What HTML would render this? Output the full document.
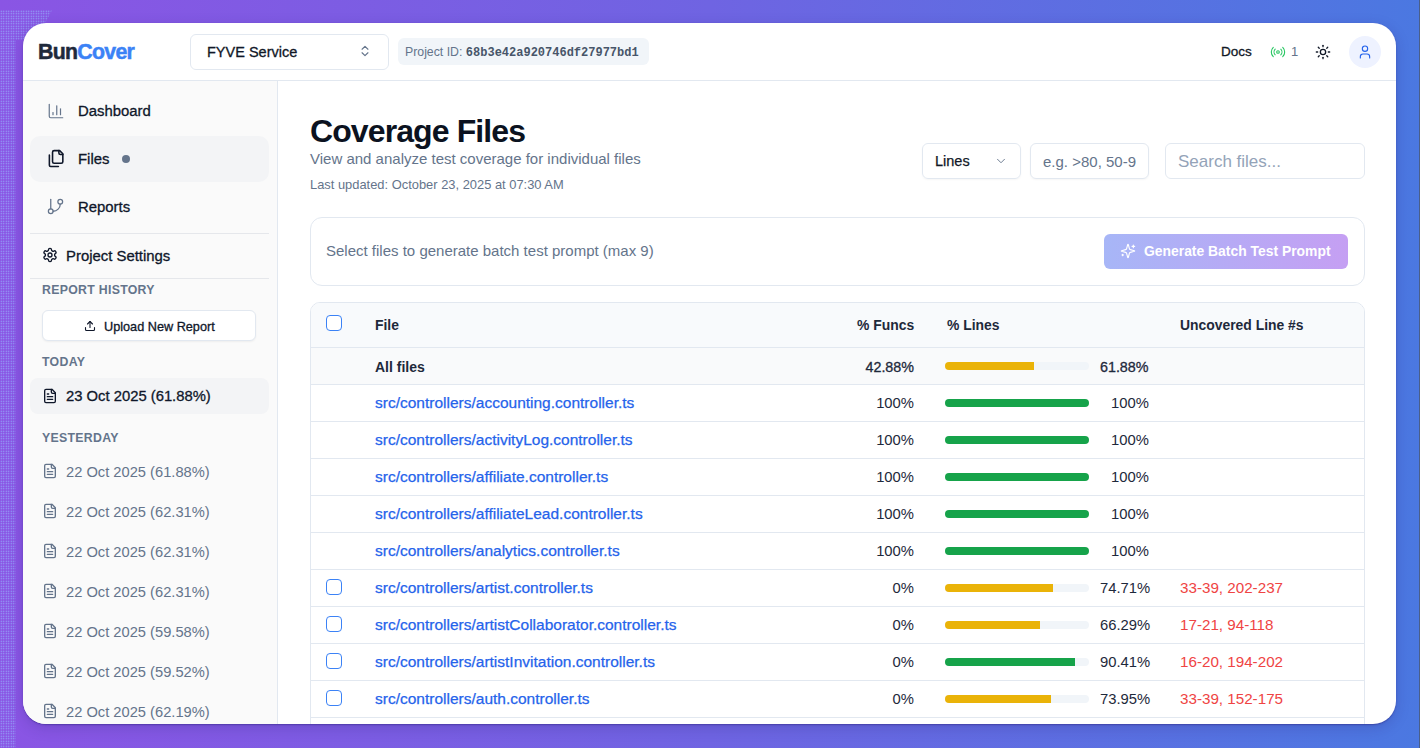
<!DOCTYPE html>
<html><head><meta charset="utf-8">
<style>
*{box-sizing:border-box;margin:0;padding:0}
html,body{width:1420px;height:748px;overflow:hidden}
body{position:relative;font-family:"Liberation Sans",sans-serif;background:linear-gradient(90deg,#8a55e4 0%,#6f64e2 50%,#4b78e1 100%);color:#1e293b}
.a{position:absolute;white-space:nowrap}
.win{position:absolute;left:23px;top:23px;width:1373px;height:701px;border-radius:23px;background:#fff;overflow:hidden;box-shadow:0 1px 1.5px rgba(40,30,120,.45),0 4px 14px rgba(40,30,120,.22)}
.L{position:absolute;left:-23px;top:-23px;width:1420px;height:748px}
svg{position:absolute;fill:none;stroke:currentColor;stroke-linecap:round;stroke-linejoin:round}
.bd{border:1px solid #e2e8f0}
.t{position:absolute;white-space:nowrap;line-height:1}
</style></head><body>
<div class="a" style="left:0;top:40px;width:16px;height:708px;background-image:radial-gradient(circle,rgba(150,195,255,.85) 0.6px,transparent 0.9px);background-size:2.5px 2.5px"></div>
<div class="a" style="left:0;top:10px;width:52px;height:30px;background-image:radial-gradient(circle,rgba(150,195,255,.85) 0.6px,transparent 0.9px);background-size:2.5px 2.5px;clip-path:polygon(0 0,100% 0,70% 100%,0 100%)"></div>
<div class="a" style="left:1419px;top:0;width:1px;height:748px;background:#4a5f8a"></div>
<div class="win"><div class="L">

<!-- header -->
<div class="a" style="left:23px;top:80px;width:1373px;height:1px;background:#e2e8f0"></div>
<div class="t" style="left:38px;top:42px;font-size:21.3px;font-weight:bold;letter-spacing:-0.7px"><span style="color:#1e293b;-webkit-text-stroke:0.5px #1e293b">Bun</span><span style="color:#3b82f6;-webkit-text-stroke:0.5px #3b82f6">Cover</span></div>

<div class="a bd" style="left:190px;top:34px;width:199px;height:36px;border-radius:6px"></div>
<div class="t" style="left:207px;top:45px;font-size:14.5px;color:#111827;-webkit-text-stroke:0.3px #111827">FYVE Service</div>
<svg style="left:358px;top:44px;color:#64748b" width="14" height="14" viewBox="0 0 24 24" stroke-width="2"><path d="m7 15 5 5 5-5"/><path d="m7 9 5-5 5 5"/></svg>

<div class="a" style="left:398px;top:38px;width:251px;height:27px;border-radius:6px;background:#f1f5f9"></div>
<div class="t" style="left:405px;top:46px;font-size:12.3px;color:#64748b">Project ID: <span style="font-family:'Liberation Mono',monospace;font-weight:bold;font-size:12px;color:#475569">68b3e42a920746df27977bd1</span></div>

<div class="t" style="left:1221px;top:45px;font-size:13.5px;color:#111827;-webkit-text-stroke:0.3px #111827">Docs</div>
<svg style="left:1270px;top:44px;color:#22c55e" width="16" height="16" viewBox="0 0 24 24" stroke-width="1.6"><path d="M4.9 19.1C1 15.2 1 8.8 4.9 4.9"/><path d="M7.8 16.2c-2.3-2.3-2.3-6.1 0-8.5"/><circle cx="12" cy="12" r="2"/><path d="M16.2 7.8c2.3 2.3 2.3 6.1 0 8.5"/><path d="M19.1 4.9C23 8.8 23 15.1 19.1 19"/></svg>
<div class="t" style="left:1291px;top:45px;font-size:13px;color:#64748b">1</div>
<svg style="left:1315px;top:44px;color:#111827" width="16" height="16" viewBox="0 0 24 24" stroke-width="2"><circle cx="12" cy="12" r="4"/><path d="M12 2v2"/><path d="M12 20v2"/><path d="m4.93 4.93 1.41 1.41"/><path d="m17.66 17.66 1.41 1.41"/><path d="M2 12h2"/><path d="M20 12h2"/><path d="m6.34 17.66-1.41 1.41"/><path d="m19.07 4.93-1.41 1.41"/></svg>
<div class="a" style="left:1349px;top:36px;width:32px;height:32px;border-radius:50%;background:#eef2ff"></div>
<svg style="left:1357px;top:44px;color:#2563eb" width="16" height="16" viewBox="0 0 24 24" stroke-width="1.7"><path d="M19 21v-2a4 4 0 0 0-4-4H9a4 4 0 0 0-4 4v2"/><circle cx="12" cy="7" r="4"/></svg>

<!-- sidebar -->
<div class="a" style="left:23px;top:81px;width:254px;height:700px;background:#fafafa"></div>
<div class="a" style="left:277px;top:81px;width:1px;height:700px;background:#e2e8f0"></div>


<!-- nav -->
<svg style="left:47px;top:102px;color:#64748b" width="18" height="18" viewBox="0 0 24 24" stroke-width="1.6"><path d="M3 3v16a2 2 0 0 0 2 2h16"/><path d="M18 17V9"/><path d="M13 17V5"/><path d="M8 17v-3"/></svg>
<div class="t" style="left:78px;top:104px;font-size:14.9px;color:#0f172a;-webkit-text-stroke:0.3px #0f172a">Dashboard</div>

<div class="a" style="left:30px;top:136px;width:239px;height:46px;border-radius:10px;background:#f3f4f6"></div>
<svg style="left:46.5px;top:148.5px;color:#0f172a" width="19" height="19" viewBox="0 0 24 24" stroke-width="2"><path d="M20 7h-3a2 2 0 0 1-2-2V2"/><path d="M9 18a2 2 0 0 1-2-2V4a2 2 0 0 1 2-2h7l4 4v10a2 2 0 0 1-2 2Z"/><path d="M3 7.6v12.8A1.6 1.6 0 0 0 4.6 22h9.8"/></svg>
<div class="t" style="left:78px;top:152px;font-size:14.9px;color:#0f172a;-webkit-text-stroke:0.3px #0f172a">Files</div>
<div class="a" style="left:122px;top:155px;width:8px;height:8px;border-radius:50%;background:#64748b"></div>

<svg style="left:46px;top:197px;color:#64748b" width="19" height="19" viewBox="0 0 24 24" stroke-width="1.6"><line x1="6" x2="6" y1="3" y2="15"/><circle cx="18" cy="6" r="3"/><circle cx="6" cy="18" r="3"/><path d="M18 9a9 9 0 0 1-9 9"/></svg>
<div class="t" style="left:78px;top:200px;font-size:14.9px;color:#0f172a;-webkit-text-stroke:0.3px #0f172a">Reports</div>

<div class="a" style="left:30px;top:233px;width:239px;height:1px;background:#e5e7eb"></div>
<svg style="left:42px;top:247px;color:#0f172a" width="16" height="16" viewBox="0 0 24 24" stroke-width="2"><path d="M12.22 2h-.44a2 2 0 0 0-2 2v.18a2 2 0 0 1-1 1.73l-.43.25a2 2 0 0 1-2 0l-.15-.08a2 2 0 0 0-2.73.73l-.22.38a2 2 0 0 0 .73 2.730l.15.1a2 2 0 0 1 1 1.72v.51a2 2 0 0 1-1 1.74l-.15.09a2 2 0 0 0-.73 2.73l.22.38a2 2 0 0 0 2.73.73l.15-.08a2 2 0 0 1 2 0l.43.25a2 2 0 0 1 1 1.73V20a2 2 0 0 0 2 2h.44a2 2 0 0 0 2-2v-.18a2 2 0 0 1 1-1.73l.43-.25a2 2 0 0 1 2 0l.15.08a2 2 0 0 0 2.73-.73l.22-.39a2 2 0 0 0-.73-2.73l-.15-.08a2 2 0 0 1-1-1.74v-.5a2 2 0 0 1 1-1.74l.15-.09a2 2 0 0 0 .73-2.73l-.22-.38a2 2 0 0 0-2.73-.73l-.15.08a2 2 0 0 1-2 0l-.43-.25a2 2 0 0 1-1-1.73V4a2 2 0 0 0-2-2z"/><circle cx="12" cy="12" r="3"/></svg>
<div class="t" style="left:66px;top:249px;font-size:14.9px;color:#0f172a;-webkit-text-stroke:0.3px #0f172a">Project Settings</div>
<div class="a" style="left:30px;top:278px;width:239px;height:1px;background:#e5e7eb"></div>

<div class="t" style="left:42px;top:284px;font-size:12.3px;font-weight:bold;letter-spacing:0.3px;color:#64748b">REPORT HISTORY</div>
<div class="a bd" style="left:42px;top:310px;width:214px;height:31px;border-radius:6px;background:#fff;box-shadow:0 1px 2px rgba(0,0,0,.05)"></div>
<svg style="left:84px;top:320px;color:#0f172a" width="12" height="12" viewBox="0 0 24 24" stroke-width="2.2"><path d="M21 15v4a2 2 0 0 1-2 2H5a2 2 0 0 1-2-2v-4"/><polyline points="17 8 12 3 7 8"/><line x1="12" x2="12" y1="3" y2="15"/></svg>
<div class="t" style="left:104px;top:321px;font-size:12.7px;color:#0f172a;-webkit-text-stroke:0.3px #0f172a">Upload New Report</div>

<div class="t" style="left:42px;top:356px;font-size:12.3px;font-weight:bold;letter-spacing:0.3px;color:#64748b">TODAY</div>
<div class="a" style="left:30px;top:378px;width:239px;height:36px;border-radius:8px;background:#f3f4f6"></div>
<svg style="left:42px;top:388px;color:#0f172a" width="16" height="16" viewBox="0 0 24 24" stroke-width="2"><path d="M15 2H6a2 2 0 0 0-2 2v16a2 2 0 0 0 2 2h12a2 2 0 0 0 2-2V7Z"/><path d="M14 2v4a2 2 0 0 0 2 2h4"/><path d="M10 9H8"/><path d="M16 13H8"/><path d="M16 17H8"/></svg>
<div class="t" style="left:66px;top:389px;font-size:14.8px;color:#0f172a;-webkit-text-stroke:0.3px #0f172a">23 Oct 2025 (61.88%)</div>

<div class="t" style="left:42px;top:432px;font-size:12.3px;font-weight:bold;letter-spacing:0.3px;color:#64748b">YESTERDAY</div>
<svg style="left:42px;top:463px;color:#64748b" width="16" height="16" viewBox="0 0 24 24" stroke-width="2"><path d="M15 2H6a2 2 0 0 0-2 2v16a2 2 0 0 0 2 2h12a2 2 0 0 0 2-2V7Z"/><path d="M14 2v4a2 2 0 0 0 2 2h4"/><path d="M10 9H8"/><path d="M16 13H8"/><path d="M16 17H8"/></svg>
<div class="t" style="left:66px;top:465px;font-size:14.7px;color:#64748b">22 Oct 2025 (61.88%)</div>
<svg style="left:42px;top:503px;color:#64748b" width="16" height="16" viewBox="0 0 24 24" stroke-width="2"><path d="M15 2H6a2 2 0 0 0-2 2v16a2 2 0 0 0 2 2h12a2 2 0 0 0 2-2V7Z"/><path d="M14 2v4a2 2 0 0 0 2 2h4"/><path d="M10 9H8"/><path d="M16 13H8"/><path d="M16 17H8"/></svg>
<div class="t" style="left:66px;top:505px;font-size:14.7px;color:#64748b">22 Oct 2025 (62.31%)</div>
<svg style="left:42px;top:543px;color:#64748b" width="16" height="16" viewBox="0 0 24 24" stroke-width="2"><path d="M15 2H6a2 2 0 0 0-2 2v16a2 2 0 0 0 2 2h12a2 2 0 0 0 2-2V7Z"/><path d="M14 2v4a2 2 0 0 0 2 2h4"/><path d="M10 9H8"/><path d="M16 13H8"/><path d="M16 17H8"/></svg>
<div class="t" style="left:66px;top:545px;font-size:14.7px;color:#64748b">22 Oct 2025 (62.31%)</div>
<svg style="left:42px;top:583px;color:#64748b" width="16" height="16" viewBox="0 0 24 24" stroke-width="2"><path d="M15 2H6a2 2 0 0 0-2 2v16a2 2 0 0 0 2 2h12a2 2 0 0 0 2-2V7Z"/><path d="M14 2v4a2 2 0 0 0 2 2h4"/><path d="M10 9H8"/><path d="M16 13H8"/><path d="M16 17H8"/></svg>
<div class="t" style="left:66px;top:585px;font-size:14.7px;color:#64748b">22 Oct 2025 (62.31%)</div>
<svg style="left:42px;top:623px;color:#64748b" width="16" height="16" viewBox="0 0 24 24" stroke-width="2"><path d="M15 2H6a2 2 0 0 0-2 2v16a2 2 0 0 0 2 2h12a2 2 0 0 0 2-2V7Z"/><path d="M14 2v4a2 2 0 0 0 2 2h4"/><path d="M10 9H8"/><path d="M16 13H8"/><path d="M16 17H8"/></svg>
<div class="t" style="left:66px;top:625px;font-size:14.7px;color:#64748b">22 Oct 2025 (59.58%)</div>
<svg style="left:42px;top:663px;color:#64748b" width="16" height="16" viewBox="0 0 24 24" stroke-width="2"><path d="M15 2H6a2 2 0 0 0-2 2v16a2 2 0 0 0 2 2h12a2 2 0 0 0 2-2V7Z"/><path d="M14 2v4a2 2 0 0 0 2 2h4"/><path d="M10 9H8"/><path d="M16 13H8"/><path d="M16 17H8"/></svg>
<div class="t" style="left:66px;top:665px;font-size:14.7px;color:#64748b">22 Oct 2025 (59.52%)</div>
<svg style="left:42px;top:703px;color:#64748b" width="16" height="16" viewBox="0 0 24 24" stroke-width="2"><path d="M15 2H6a2 2 0 0 0-2 2v16a2 2 0 0 0 2 2h12a2 2 0 0 0 2-2V7Z"/><path d="M14 2v4a2 2 0 0 0 2 2h4"/><path d="M10 9H8"/><path d="M16 13H8"/><path d="M16 17H8"/></svg>
<div class="t" style="left:66px;top:705px;font-size:14.7px;color:#64748b">22 Oct 2025 (62.19%)</div>

<!-- main -->
<div class="t" style="left:310px;top:115px;font-size:32px;font-weight:bold;letter-spacing:-0.9px;color:#0b1220">Coverage Files</div>
<div class="t" style="left:310px;top:151px;font-size:15px;color:#64748b">View and analyze test coverage for individual files</div>
<div class="t" style="left:310px;top:178.5px;font-size:12.9px;color:#64748b">Last updated: October 23, 2025 at 07:30 AM</div>

<div class="a bd" style="left:922px;top:143px;width:99px;height:36px;border-radius:6px;box-shadow:0 1px 2px rgba(0,0,0,.04)"></div>
<div class="t" style="left:935px;top:154px;font-size:14.5px;color:#111827;-webkit-text-stroke:0.25px #111827">Lines</div>
<svg style="left:994px;top:154px;color:#64748b" width="14" height="14" viewBox="0 0 24 24" stroke-width="1.6"><path d="m6 9 6 6 6-6"/></svg>
<div class="a bd" style="left:1030px;top:143px;width:119px;height:36px;border-radius:6px;overflow:hidden;box-shadow:0 1px 2px rgba(0,0,0,.04)"><div class="a" style="left:12px;top:0;width:93px;height:34px;overflow:hidden"><div class="t" style="left:0;top:10px;font-size:15px;color:#64748b">e.g. &gt;80, 50-90</div></div></div>
<div class="a bd" style="left:1165px;top:143px;width:200px;height:36px;border-radius:6px"></div>
<div class="t" style="left:1178px;top:153px;font-size:17px;color:#94a3b8">Search files...</div>

<div class="a bd" style="left:310px;top:217px;width:1055px;height:69px;border-radius:12px"></div>
<div class="t" style="left:326px;top:243px;font-size:15px;color:#64748b">Select files to generate batch test prompt (max 9)</div>
<div class="a" style="left:1104px;top:234px;width:244px;height:35px;border-radius:6px;background:linear-gradient(90deg,#a7b6f7,#c59ff3)"></div>
<svg style="left:1120px;top:243px;color:#fff" width="16" height="16" viewBox="0 0 24 24" stroke-width="1.7"><path d="M9.937 15.5A2 2 0 0 0 8.5 14.063l-6.135-1.582a.5.5 0 0 1 0-.962L8.5 9.936A2 2 0 0 0 9.937 8.5l1.582-6.135a.5.5 0 0 1 .963 0L14.063 8.5A2 2 0 0 0 15.5 9.937l6.135 1.581a.5.5 0 0 1 0 .964L15.5 14.063a2 2 0 0 0-1.437 1.437l-1.582 6.135a.5.5 0 0 1-.963 0z"/><path d="M20 3v4"/><path d="M22 5h-4"/><path d="M4 17v2"/><path d="M5 18H3"/></svg>
<div class="t" style="left:1144px;top:245px;font-size:13.9px;font-weight:bold;color:#fff">Generate Batch Test Prompt</div>

<!-- table -->
<div class="a bd" style="left:310px;top:302px;width:1055px;height:460px;border-radius:10px;overflow:hidden">
  <div class="a" style="left:0;top:0;width:1055px;height:45px;background:#f8fafc;border-bottom:1px solid #e2e8f0"></div>
  <div class="a" style="left:0;top:45px;width:1055px;height:37px;background:#f9fafb;border-bottom:1px solid #e2e8f0"></div>
<div class="a" style="left:0;top:82px;width:1055px;height:37px;border-bottom:1px solid #e2e8f0"></div>
<div class="a" style="left:0;top:119px;width:1055px;height:37px;border-bottom:1px solid #e2e8f0"></div>
<div class="a" style="left:0;top:156px;width:1055px;height:37px;border-bottom:1px solid #e2e8f0"></div>
<div class="a" style="left:0;top:193px;width:1055px;height:37px;border-bottom:1px solid #e2e8f0"></div>
<div class="a" style="left:0;top:230px;width:1055px;height:37px;border-bottom:1px solid #e2e8f0"></div>
<div class="a" style="left:0;top:267px;width:1055px;height:37px;border-bottom:1px solid #e2e8f0"></div>
<div class="a" style="left:0;top:304px;width:1055px;height:37px;border-bottom:1px solid #e2e8f0"></div>
<div class="a" style="left:0;top:341px;width:1055px;height:37px;border-bottom:1px solid #e2e8f0"></div>
<div class="a" style="left:0;top:378px;width:1055px;height:37px;border-bottom:1px solid #e2e8f0"></div>
</div>
<div class="a" style="left:326px;top:315px;width:16px;height:16px;border:1.5px solid #3b82f6;border-radius:4px;background:#fff"></div>
<div class="t" style="left:375px;top:319px;font-size:13.9px;font-weight:bold;color:#1e293b">File</div>
<div class="t" style="left:857px;top:319px;font-size:13.9px;font-weight:bold;color:#1e293b">% Funcs</div>
<div class="t" style="left:947px;top:319px;font-size:13.9px;font-weight:bold;color:#1e293b">% Lines</div>
<div class="t" style="left:1180px;top:319px;font-size:13.9px;font-weight:bold;color:#1e293b">Uncovered Line #s</div>
<div class="t" style="left:375px;top:360px;font-size:14px;font-weight:bold;color:#1e293b">All files</div>
<div class="t" style="right:506px;top:360px;font-size:14.3px;color:#1e293b;-webkit-text-stroke:0.3px #1e293b">42.88%</div>
<div class="a" style="left:945px;top:362px;width:144px;height:8px;border-radius:4px;background:#f1f5f9;overflow:hidden"><div style="width:61.88%;height:100%;background:#eab308"></div></div>
<div class="t" style="left:1100px;top:360px;font-size:14.3px;color:#1e293b;-webkit-text-stroke:0.3px #1e293b">61.88%</div>
<div class="t" style="left:375px;top:395px;font-size:15.5px;color:#2563eb;-webkit-text-stroke:0.25px #2563eb">src/controllers/accounting.controller.ts</div>
<div class="t" style="right:506px;top:395.5px;font-size:14.8px;color:#1e293b">100%</div>
<div class="a" style="left:945px;top:399px;width:144px;height:8px;border-radius:4px;background:#f1f5f9;overflow:hidden"><div style="width:100%;height:100%;background:#16a34a"></div></div>
<div class="t" style="left:1111px;top:395.5px;font-size:14.8px;color:#1e293b">100%</div>
<div class="t" style="left:375px;top:432px;font-size:15.5px;color:#2563eb;-webkit-text-stroke:0.25px #2563eb">src/controllers/activityLog.controller.ts</div>
<div class="t" style="right:506px;top:432.5px;font-size:14.8px;color:#1e293b">100%</div>
<div class="a" style="left:945px;top:436px;width:144px;height:8px;border-radius:4px;background:#f1f5f9;overflow:hidden"><div style="width:100%;height:100%;background:#16a34a"></div></div>
<div class="t" style="left:1111px;top:432.5px;font-size:14.8px;color:#1e293b">100%</div>
<div class="t" style="left:375px;top:469px;font-size:15.5px;color:#2563eb;-webkit-text-stroke:0.25px #2563eb">src/controllers/affiliate.controller.ts</div>
<div class="t" style="right:506px;top:469.5px;font-size:14.8px;color:#1e293b">100%</div>
<div class="a" style="left:945px;top:473px;width:144px;height:8px;border-radius:4px;background:#f1f5f9;overflow:hidden"><div style="width:100%;height:100%;background:#16a34a"></div></div>
<div class="t" style="left:1111px;top:469.5px;font-size:14.8px;color:#1e293b">100%</div>
<div class="t" style="left:375px;top:506px;font-size:15.5px;color:#2563eb;-webkit-text-stroke:0.25px #2563eb">src/controllers/affiliateLead.controller.ts</div>
<div class="t" style="right:506px;top:506.5px;font-size:14.8px;color:#1e293b">100%</div>
<div class="a" style="left:945px;top:510px;width:144px;height:8px;border-radius:4px;background:#f1f5f9;overflow:hidden"><div style="width:100%;height:100%;background:#16a34a"></div></div>
<div class="t" style="left:1111px;top:506.5px;font-size:14.8px;color:#1e293b">100%</div>
<div class="t" style="left:375px;top:543px;font-size:15.5px;color:#2563eb;-webkit-text-stroke:0.25px #2563eb">src/controllers/analytics.controller.ts</div>
<div class="t" style="right:506px;top:543.5px;font-size:14.8px;color:#1e293b">100%</div>
<div class="a" style="left:945px;top:547px;width:144px;height:8px;border-radius:4px;background:#f1f5f9;overflow:hidden"><div style="width:100%;height:100%;background:#16a34a"></div></div>
<div class="t" style="left:1111px;top:543.5px;font-size:14.8px;color:#1e293b">100%</div>
<div class="a" style="left:326px;top:579px;width:16px;height:16px;border:1.5px solid #3b82f6;border-radius:4px;background:#fff"></div>
<div class="t" style="left:375px;top:580px;font-size:15.5px;color:#2563eb;-webkit-text-stroke:0.25px #2563eb">src/controllers/artist.controller.ts</div>
<div class="t" style="right:506px;top:580.5px;font-size:14.8px;color:#1e293b">0%</div>
<div class="a" style="left:945px;top:584px;width:144px;height:8px;border-radius:4px;background:#f1f5f9;overflow:hidden"><div style="width:74.71%;height:100%;background:#eab308"></div></div>
<div class="t" style="left:1100px;top:580.5px;font-size:14.8px;color:#1e293b">74.71%</div>
<div class="t" style="left:1180px;top:580px;font-size:15.2px;color:#ef4444">33-39, 202-237</div>
<div class="a" style="left:326px;top:616px;width:16px;height:16px;border:1.5px solid #3b82f6;border-radius:4px;background:#fff"></div>
<div class="t" style="left:375px;top:617px;font-size:15.5px;color:#2563eb;-webkit-text-stroke:0.25px #2563eb">src/controllers/artistCollaborator.controller.ts</div>
<div class="t" style="right:506px;top:617.5px;font-size:14.8px;color:#1e293b">0%</div>
<div class="a" style="left:945px;top:621px;width:144px;height:8px;border-radius:4px;background:#f1f5f9;overflow:hidden"><div style="width:66.29%;height:100%;background:#eab308"></div></div>
<div class="t" style="left:1100px;top:617.5px;font-size:14.8px;color:#1e293b">66.29%</div>
<div class="t" style="left:1180px;top:617px;font-size:15.2px;color:#ef4444">17-21, 94-118</div>
<div class="a" style="left:326px;top:653px;width:16px;height:16px;border:1.5px solid #3b82f6;border-radius:4px;background:#fff"></div>
<div class="t" style="left:375px;top:654px;font-size:15.5px;color:#2563eb;-webkit-text-stroke:0.25px #2563eb">src/controllers/artistInvitation.controller.ts</div>
<div class="t" style="right:506px;top:654.5px;font-size:14.8px;color:#1e293b">0%</div>
<div class="a" style="left:945px;top:658px;width:144px;height:8px;border-radius:4px;background:#f1f5f9;overflow:hidden"><div style="width:90.41%;height:100%;background:#16a34a"></div></div>
<div class="t" style="left:1100px;top:654.5px;font-size:14.8px;color:#1e293b">90.41%</div>
<div class="t" style="left:1180px;top:654px;font-size:15.2px;color:#ef4444">16-20, 194-202</div>
<div class="a" style="left:326px;top:690px;width:16px;height:16px;border:1.5px solid #3b82f6;border-radius:4px;background:#fff"></div>
<div class="t" style="left:375px;top:691px;font-size:15.5px;color:#2563eb;-webkit-text-stroke:0.25px #2563eb">src/controllers/auth.controller.ts</div>
<div class="t" style="right:506px;top:691.5px;font-size:14.8px;color:#1e293b">0%</div>
<div class="a" style="left:945px;top:695px;width:144px;height:8px;border-radius:4px;background:#f1f5f9;overflow:hidden"><div style="width:73.95%;height:100%;background:#eab308"></div></div>
<div class="t" style="left:1100px;top:691.5px;font-size:14.8px;color:#1e293b">73.95%</div>
<div class="t" style="left:1180px;top:691px;font-size:15.2px;color:#ef4444">33-39, 152-175</div>
</div></div>
</body></html>
